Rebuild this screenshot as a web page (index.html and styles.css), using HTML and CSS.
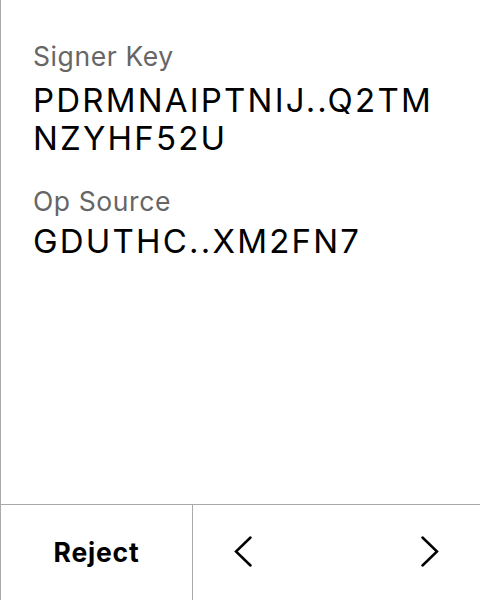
FILE: index.html
```html
<!DOCTYPE html>
<html>
<head>
<meta charset="utf-8">
<link rel="stylesheet" href="styles.css">
</head>
<body>
<div class="screen">
  <div class="content">
    <div class="field">
      <div class="label">Signer Key</div>
      <div class="value first">PDRMNAIPTNIJ..Q2TM<br>NZYHF52U</div>
    </div>
    <div class="field">
      <div class="label">Op Source</div>
      <div class="value">GDUTHC..XM2FN7</div>
    </div>
  </div>
  <div class="footer">
    <div class="reject">Reject</div>
    <div class="nav">
      <svg class="chev" width="18" height="31" viewBox="0 0 18 31"><polyline points="16.5,1.5 2,15.5 16.5,29.5" fill="none" stroke="#000" stroke-width="2.5" stroke-linecap="round" stroke-linejoin="miter"/></svg>
      <svg class="chev" width="18" height="31" viewBox="0 0 18 31"><polyline points="1.5,1.5 16,15.5 1.5,29.5" fill="none" stroke="#000" stroke-width="2.5" stroke-linecap="round" stroke-linejoin="miter"/></svg>
    </div>
  </div>
</div>
</body>
</html>
```
FILE: styles.css
```css
html, body {
  margin: 0;
  padding: 0;
  background: #fff;
}
.screen {
  width: 479px;
  height: 600px;
  border-left: 1px solid #aaa;
  display: flex;
  flex-direction: column;
  font-family: Inter, "Noto Sans", sans-serif;
}
.content {
  flex: 1;
  padding: 39px 0 0 32px;
  display: flex;
  flex-direction: column;
  gap: 27px;
}
.label {
  font-size: 26.5px;
  line-height: 34px;
  letter-spacing: 0.6px;
  color: #666;
}
.value {
  margin-top: 4px;
  font-size: 33px;
  line-height: 38px;
  letter-spacing: 2.2px;
  color: #000;
}
.value.first {
  margin-top: 8px;
}
.footer {
  height: 95px;
  border-top: 1px solid #aaa;
  display: flex;
}
.reject {
  width: 191px;
  border-right: 1px solid #aaa;
  display: flex;
  align-items: center;
  justify-content: center;
  font-size: 26.5px;
  font-weight: 700;
  letter-spacing: 0.8px;
  padding-bottom: 2px;
}
.nav {
  flex: 1;
  display: flex;
  align-items: center;
  justify-content: space-between;
  padding: 0 41px 2px 41px;
}
```
